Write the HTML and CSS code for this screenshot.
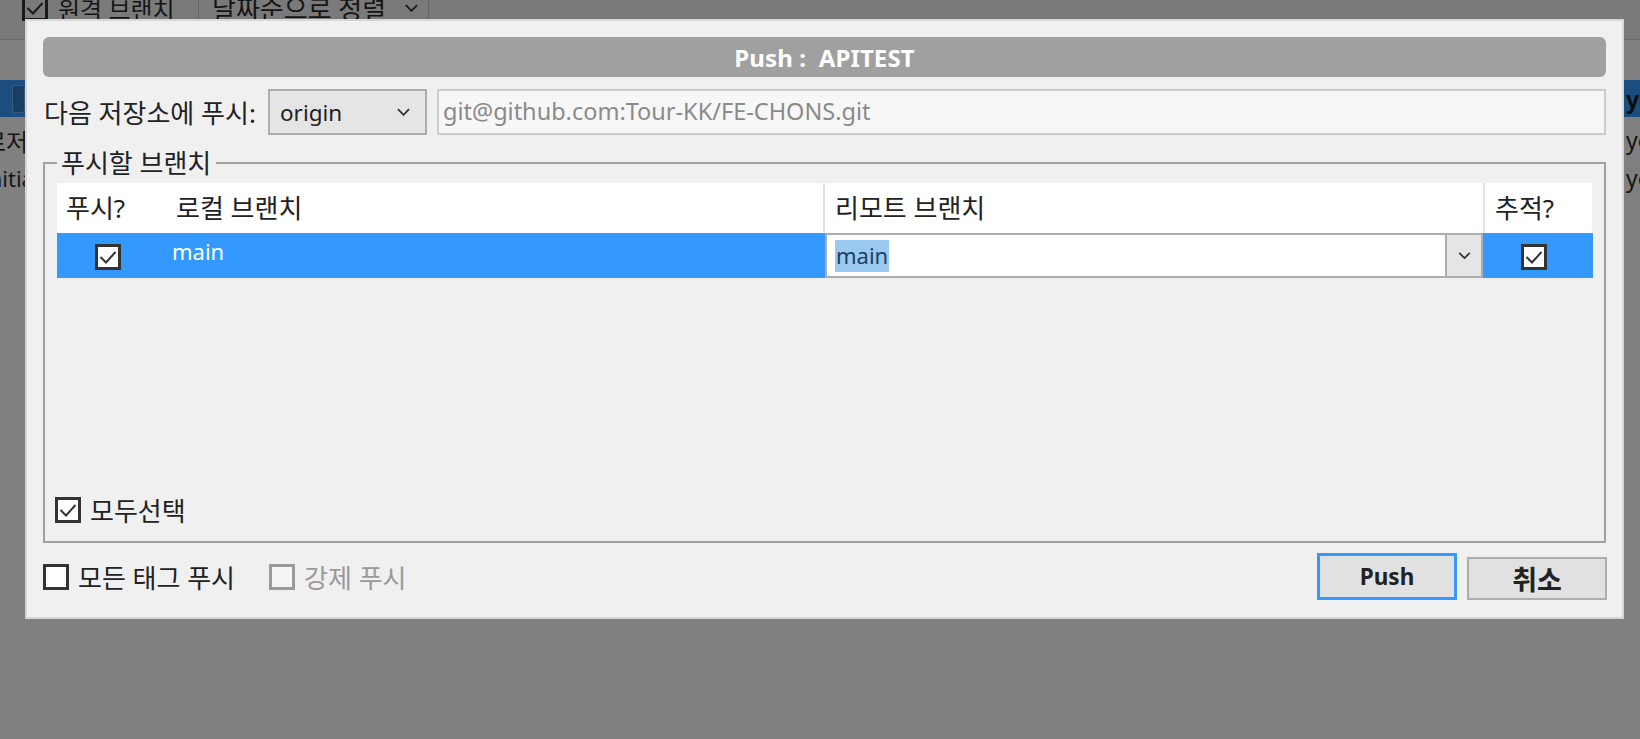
FILE: index.html
```html
<!DOCTYPE html>
<html lang="ko">
<head>
<meta charset="utf-8">
<title>Push</title>
<link rel="stylesheet" href="styles.css">
</head>
<body>
<div class="app">
  <div class="toolbar">
    <div class="tb-check">
      <span class="cb cb-bg"><svg viewBox="0 0 20 20"><path d="M2.5 10 L8 15.5 L17.5 5"/></svg></span>
      <span>원격 브랜치</span>
    </div>
    <div class="tb-sep"></div>
    <div class="tb-sort">
      <span>날짜순으로 정렬</span>
      <svg class="chev" viewBox="0 0 14 8"><path d="M1 1 L7 7 L13 1"/></svg>
    </div>
    <div class="tb-sep"></div>
  </div>
  <div class="bg-gap"></div>
  <div class="bg-row bg-sel">
    <span class="bg-left"><span class="bg-badge"></span></span>
    <span class="bg-right strong">yes</span>
  </div>
  <div class="bg-row">
    <span class="bg-left-text ko">로저장소</span>
    <span class="bg-right">yes</span>
  </div>
  <div class="bg-row">
    <span class="bg-left-text en">initial</span>
    <span class="bg-right">yes</span>
  </div>
</div>

<div class="dialog" role="dialog">
  <div class="title">Push :&nbsp; APITEST</div>

  <div class="remote-row">
    <span class="label">다음 저장소에 푸시:</span>
    <div class="select">
      <span>origin</span>
      <svg class="chev" viewBox="0 0 14 8"><path d="M1 1 L7 7 L13 1"/></svg>
    </div>
    <div class="url">git@github.com:Tour-KK/FE-CHONS.git</div>
  </div>

  <fieldset class="group">
    <legend>푸시할 브랜치</legend>
    <div class="group-body">
      <div class="grid">
        <div class="th">푸시?</div>
        <div class="th th-local">로컬 브랜치</div>
        <div class="th th-sep">리모트 브랜치</div>
        <div class="th th-sep">추적?</div>

        <div class="td td-center td-push">
          <span class="cb"><svg viewBox="0 0 20 20"><path d="M2.5 10 L8 15.5 L17.5 5"/></svg></span>
        </div>
        <div class="td td-local">main</div>
        <div class="td td-edit">
          <div class="editor">
            <span class="editor-text"><span class="sel-text">main</span></span>
            <span class="editor-btn"><svg class="chev-sm" viewBox="0 0 14 8"><path d="M1 1 L7 7 L13 1"/></svg></span>
          </div>
        </div>
        <div class="td td-center td-track">
          <span class="cb"><svg viewBox="0 0 20 20"><path d="M2.5 10 L8 15.5 L17.5 5"/></svg></span>
        </div>
      </div>

      <label class="check-line select-all">
        <span class="cb"><svg viewBox="0 0 20 20"><path d="M2.5 10 L8 15.5 L17.5 5"/></svg></span>
        <span>모두선택</span>
      </label>
    </div>
  </fieldset>

  <div class="footer">
    <label class="check-line">
      <span class="cb"></span>
      <span>모든 태그 푸시</span>
    </label>
    <label class="check-line disabled">
      <span class="cb cb-disabled"></span>
      <span>강제 푸시</span>
    </label>
    <div class="buttons">
      <button class="btn btn-primary" type="button">Push</button>
      <button class="btn btn-ko" type="button">취소</button>
    </div>
  </div>
</div>
</body>
</html>
```

FILE: styles.css
```css
* { box-sizing: border-box; }

html, body {
  margin: 0;
  padding: 0;
  width: 1640px;
  height: 739px;
  overflow: hidden;
}

body {
  background: #808080;
  font-family: "Noto Sans", "Noto Sans CJK KR", sans-serif;
  font-size: 26px;
  color: #222;
  position: relative;
}

/* ---------- dimmed application behind ---------- */
.app {
  display: flex;
  flex-direction: column;
  color: #151515;
}

.toolbar {
  height: 40px;
  background: #7a7a7a;
  border-bottom: 1px solid #6c6c6c;
  display: flex;
  align-items: flex-start;
  padding-left: 22px;
}

.tb-check {
  display: flex;
  align-items: center;
  gap: 10px;
  margin-top: -7px;
  height: 30px;
  width: 176px;
  white-space: nowrap;
  overflow: hidden;
  font-size: 24px;
}

.tb-sep {
  width: 1px;
  height: 40px;
  background: #666;
}

.tb-sort {
  display: flex;
  align-items: center;
  margin-top: -7px;
  height: 30px;
  width: 229px;
  padding-left: 13px;
  gap: 19px;
  white-space: nowrap;
}

.tb-sort .chev {
  width: 13px;
  height: 8px;
}

.bg-gap { height: 40px; }

.bg-row {
  height: 38px;
  display: flex;
  justify-content: space-between;
  align-items: center;
  white-space: nowrap;
  overflow: hidden;
  font-size: 24px;
}

.bg-sel {
  height: 37px;
  background: #1c4d80;
  margin-bottom: 4px;
}

.bg-left {
  width: 25px;
  height: 100%;
  display: flex;
  align-items: center;
  padding-left: 12px;
}

.bg-badge {
  width: 16px;
  height: 28px;
  border: 1px solid #3b5a7a;
  border-radius: 3px;
  background: #1a3d63;
}

.bg-left-text.ko { margin-left: -16px; }
.bg-left-text.en { margin-left: -17px; font-size: 22px; }

.bg-right {
  width: 16px;
  overflow: hidden;
  padding-left: 2px;
  font-size: 23px;
}

.bg-right.strong { font-weight: 700; color: #0d0d0d; }

.cb {
  width: 26px;
  height: 26px;
  border: 3px solid #333;
  background: #fff;
  display: inline-flex;
  align-items: center;
  justify-content: center;
  flex: none;
}

.cb svg {
  width: 20px;
  height: 20px;
  fill: none;
  stroke: #333;
  stroke-width: 2;
}

.cb-bg {
  background: transparent;
  border-color: #1a1a1a;
}

.cb-bg svg { stroke: #1a1a1a; }

.chev, .chev-sm {
  fill: none;
  stroke: #333;
  stroke-width: 2;
}

.toolbar .chev { stroke: #1a1a1a; }

/* ---------- dialog ---------- */
.dialog {
  position: absolute;
  left: 25px;
  top: 19px;
  width: 1599px;
  background: #f0f0f0;
  border: 2px solid #d6d6d6;
  padding: 16px 16px 17px 16px;
  display: flex;
  flex-direction: column;
}

.title {
  height: 40px;
  background: #a0a0a0;
  border-radius: 6px;
  color: #fff;
  font-weight: 700;
  font-size: 24px;
  display: flex;
  align-items: center;
  justify-content: center;
  letter-spacing: 0.1px;
}

.remote-row {
  margin-top: 12px;
  height: 46px;
  display: flex;
  align-items: center;
}

.label {
  margin-left: 1px;
  width: 224px;
  white-space: nowrap;
}

.select {
  width: 159px;
  height: 46px;
  background: #e5e5e5;
  border: 2px solid #adadad;
  display: flex;
  align-items: center;
  justify-content: space-between;
  padding: 0 15px 0 10px;
  font-size: 22.5px;
}

.select .chev {
  width: 13px;
  height: 8px;
}

.url {
  margin-left: 10px;
  flex: 1;
  height: 46px;
  background: #f7f7f7;
  border: 2px solid #cccccc;
  color: #8a8a8a;
  display: flex;
  align-items: center;
  padding-left: 4px;
  padding-bottom: 2px;
  font-size: 23.5px;
  white-space: nowrap;
}

.group {
  margin: 13px 0 0 0;
  padding: 5px 12px 18px 12px;
  border: 2px solid #a0a0a0;
  min-width: 0;
  height: 395px;
}

.group legend {
  padding: 0 5px 0 4px;
  height: 30px;
  line-height: 30px;
}

.group-body {
  height: 340px;
  display: flex;
  flex-direction: column;
  justify-content: space-between;
}

.grid {
  display: grid;
  grid-template-columns: 108px 658px 660px 110px;
  grid-template-rows: 50px 45px;
  background: #fff;
}

.th {
  display: flex;
  align-items: center;
  padding-left: 9px;
  padding-bottom: 2px;
  white-space: nowrap;
}

.th-local { padding-left: 11px; }

.th-sep {
  border-left: 2px solid #e3e3e3;
  padding-left: 10px;
}

.td {
  background: #3399ff;
  display: flex;
}

.td-center {
  align-items: center;
  justify-content: center;
}

.td-center .cb { margin-top: 2px; }
.td-push .cb { margin-left: -6px; }
.td-track .cb { margin-left: -8px; }

.td-local {
  color: #fff;
  padding-left: 7px;
  padding-top: 3px;
  line-height: 30px;
  font-size: 22px;
}

.td-edit { padding-left: 2px; }

.editor {
  flex: 1;
  display: flex;
  border: 2px solid #adadad;
  background: #fff;
}

.editor-text {
  flex: 1;
  display: flex;
  align-items: center;
  padding-left: 8px;
}

.sel-text {
  background: #99c9ef;
  color: #1c3f66;
  height: 32px;
  line-height: 30px;
  padding: 0 1px;
  margin-top: 1px;
  font-size: 22px;
}

.editor-btn {
  width: 36px;
  background: #e5e5e5;
  border-left: 2px solid #adadad;
  display: flex;
  align-items: center;
  justify-content: center;
}

.chev-sm {
  width: 13px;
  height: 7px;
}

.check-line {
  display: flex;
  align-items: center;
  gap: 9px;
  white-space: nowrap;
}

.select-all {
  margin-left: -2px;
  height: 26px;
}

.footer {
  margin-top: 10px;
  height: 47px;
  display: flex;
  align-items: center;
}

.footer .check-line + .check-line { margin-left: 34px; }

.disabled { color: #9a9a9a; }

.cb-disabled {
  border-color: #9a9a9a;
  background: #f4f4f4;
}

.buttons {
  margin-left: auto;
  margin-right: -1px;
  height: 47px;
  display: flex;
  align-items: flex-end;
  gap: 10px;
}

.btn {
  width: 140px;
  height: 43px;
  background: #e1e1e1;
  border: 2px solid #adadad;
  font-family: "Noto Sans", "Noto Sans CJK KR", sans-serif;
  font-size: 22.5px;
  font-weight: 700;
  color: #222;
  padding: 0;
}

.btn-ko { font-size: 27px; }

.btn-primary {
  height: 47px;
  border: 3px solid #3399ff;
}
```
